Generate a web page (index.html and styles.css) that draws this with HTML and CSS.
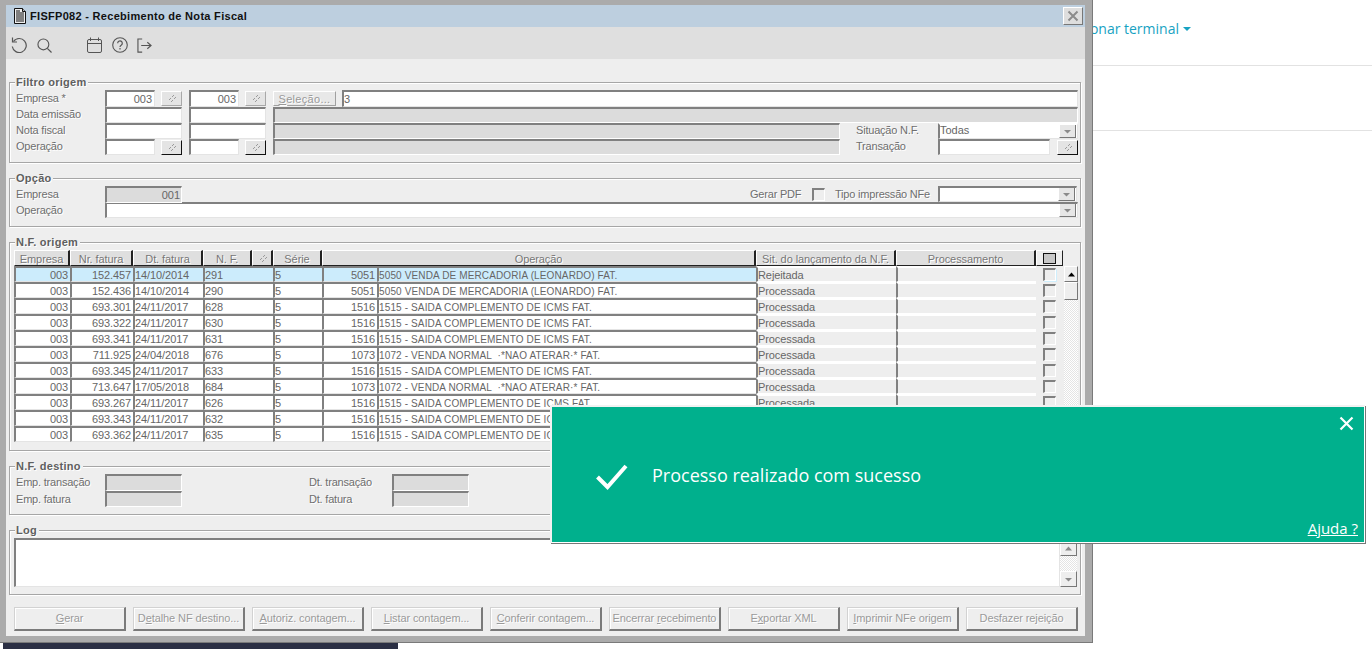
FILE: index.html
```html
<!DOCTYPE html>
<html lang="pt-BR">
<head>
<meta charset="utf-8">
<title>FISFP082 - Recebimento de Nota Fiscal</title>
<link rel="stylesheet" href="styles.css">
</head>
<body>
<svg class="defs" width="0" height="0" aria-hidden="true">
  <symbol id="zoom" viewBox="0 0 13 11"><path d="M8 2.500h1M7 3.500h1M5 5.500h1M4 6.500h1M10 4.500h1M9 5.500h1M7 7.500h1M6 8.500h1" stroke="#9a9a9a" stroke-width="1" fill="none"/></symbol>
  <symbol id="down" viewBox="0 0 9 5"><path d="M1 1h7L4.500 4.500z" fill="#8a8a8a"/></symbol>
</svg>

<header class="topbar"><a class="terminal">Selecionar terminal<span class="caret"></span></a></header>
<div class="subbar"></div>

<div class="taskbar"></div>

<main class="window">
  <div class="titlebar">
    <svg class="docicon" width="14" height="18" viewBox="0 0 14 18"><path d="M1.500 1.500h8l3 3v12h-11z" fill="#eee" stroke="#111"/><path d="M3 4h4M3 6h8M3 8h8M3 10h8M3 12h8M3 14h8" stroke="#111" stroke-width="1.200"/><path d="M9.500 1.500v3h3" fill="#bbb" stroke="#111"/></svg>
    <h1 class="title">FISFP082 - Recebimento de Nota Fiscal</h1>
    <button class="winclose" aria-label="Fechar"><svg width="12" height="12" viewBox="0 0 12 12"><path d="M1.500 1.500l9 9M10.500 1.500l-9 9" stroke="#8b8b8b" stroke-width="2" fill="none"/></svg></button>
  </div>
  <div class="toolbar">
    <svg class="tool t-undo" width="18" height="16" viewBox="0 0 18 16"><path d="M3.500 4.500A7 7 0 1 1 2.300 9.500" fill="none" stroke="#555" stroke-width="1.200"/><path d="M2.500 .5v4.500h4.500" fill="none" stroke="#555" stroke-width="1.200"/></svg>
    <svg class="tool t-search" width="15" height="15" viewBox="0 0 16 16"><circle cx="6.800" cy="6.800" r="5.800" fill="none" stroke="#555" stroke-width="1.200"/><path d="M11 11l4.500 4.500" stroke="#555" stroke-width="1.300"/></svg>
    <svg class="tool t-cal" width="15" height="16" viewBox="0 0 15 16"><rect x=".5" y="2.500" width="14" height="13" rx="1.500" fill="none" stroke="#555"/><path d="M.5 6.500h14M3.500 .5v3.500M11.500 .5v3.500" stroke="#555" fill="none"/></svg>
    <svg class="tool t-help" width="16" height="16" viewBox="0 0 16 16"><circle cx="8" cy="8" r="7.300" fill="none" stroke="#555" stroke-width="1.100"/><path d="M5.700 6.200a2.300 2.300 0 1 1 3.700 1.800c-.9.600-1.400 1-1.400 2" fill="none" stroke="#555" stroke-width="1.200"/><path d="M8 11v1.500" stroke="#555" stroke-width="1.200"/></svg>
    <svg class="tool t-exit" width="15" height="15" viewBox="0 0 16 16"><path d="M5.500 1H1v14h4.500" fill="none" stroke="#555" stroke-width="1.200"/><path d="M4.500 8h10.500M11 4.500L15 8l-4 3.500" fill="none" stroke="#555" stroke-width="1.200"/></svg>
  </div>

  <div class="content">
    <section class="group g-filtro">
      <h2 class="legend">Filtro origem</h2>
      <div class="form-filtro">
        <span class="lbl">Empresa *</span>
        <span class="fld num c2">003</span><button class="zbtn flat c4"><svg width="13" height="11"><use href="#zoom"/></svg></button>
        <span class="fld num c6">003</span><button class="zbtn flat c8"><svg width="13" height="11"><use href="#zoom"/></svg></button>
        <button class="selbtn c10"><u>S</u>eleção...</button>
        <span class="fld c12-18">3</span>

        <span class="lbl up1">Data emissão</span>
        <span class="fld c2-5"></span><span class="fld c6-9"></span>
        <span class="fld off c10-18"></span>

        <span class="lbl up1">Nota fiscal</span>
        <span class="fld c2-5"></span><span class="fld c6-9"></span>
        <span class="fld off c10-13"></span>
        <span class="lbl c14 up1">Situação N.F.</span>
        <span class="fld sel c15-18">Todas<i class="ddbtn"><svg width="9" height="5"><use href="#down"/></svg></i></span>

        <span class="lbl up1">Operação</span>
        <span class="fld c2n"></span><button class="zbtn c4"><svg width="13" height="11"><use href="#zoom"/></svg></button>
        <span class="fld c6"></span><button class="zbtn c8"><svg width="13" height="11"><use href="#zoom"/></svg></button>
        <span class="fld off c10-13"></span>
        <span class="lbl c14 up1">Transação</span>
        <span class="fld c15"></span><button class="zbtn c17"><svg width="13" height="11"><use href="#zoom"/></svg></button>
      </div>
    </section>

    <section class="group g-opcao">
      <h2 class="legend">Opção</h2>
      <div class="form-opcao">
        <span class="lbl">Empresa</span>
        <span class="fld off num">001</span>
        <span class="lbl pdf">Gerar PDF</span>
        <span class="check"></span>
        <span class="lbl tipo">Tipo impressão NFe</span>
        <span class="fld sel"><i class="ddbtn"><svg width="9" height="5"><use href="#down"/></svg></i></span>
        <span class="lbl">Operação</span>
        <span class="fld sel wide"><i class="ddbtn"><svg width="9" height="5"><use href="#down"/></svg></i></span>
      </div>
    </section>

    <section class="group g-origem">
      <h2 class="legend">N.F. origem</h2>
      <div class="grid-wrap">
        <table class="grid">
          <colgroup><col class="w-emp"><col class="w-nr"><col class="w-dt"><col class="w-nf"><col class="w-ic"><col class="w-se"><col class="w-cod"><col class="w-op"><col class="w-sit"><col class="w-pr"><col class="w-ck"></colgroup>
          <thead><tr>
            <th>Empresa</th><th>Nr. fatura</th><th>Dt. fatura</th><th>N. F.</th><th><svg width="13" height="11"><use href="#zoom"/></svg></th><th>Série</th><th colspan="2">Operação</th><th>Sit. do lançamento da N.F.</th><th>Processamento</th><th><span class="allcheck"></span></th>
          </tr></thead>
          <tbody>
            <tr class="active"><td class="n">003</td><td class="n">152.457</td><td>14/10/2014</td><td colspan="2">291</td><td>5</td><td class="n">5051</td><td class="op">5050 VENDA DE MERCADORIA (LEONARDO) FAT.</td><td class="ro">Rejeitada</td><td class="ro"></td><td class="ckc"><span class="check focus"></span></td></tr>
            <tr><td class="n">003</td><td class="n">152.436</td><td>14/10/2014</td><td colspan="2">290</td><td>5</td><td class="n">5051</td><td class="op">5050 VENDA DE MERCADORIA (LEONARDO) FAT.</td><td class="ro">Processada</td><td class="ro"></td><td class="ckc"><span class="check"></span></td></tr>
            <tr><td class="n">003</td><td class="n">693.301</td><td>24/11/2017</td><td colspan="2">628</td><td>5</td><td class="n">1516</td><td class="op">1515 - SAIDA COMPLEMENTO DE ICMS FAT.</td><td class="ro">Processada</td><td class="ro"></td><td class="ckc"><span class="check"></span></td></tr>
            <tr><td class="n">003</td><td class="n">693.322</td><td>24/11/2017</td><td colspan="2">630</td><td>5</td><td class="n">1516</td><td class="op">1515 - SAIDA COMPLEMENTO DE ICMS FAT.</td><td class="ro">Processada</td><td class="ro"></td><td class="ckc"><span class="check"></span></td></tr>
            <tr><td class="n">003</td><td class="n">693.341</td><td>24/11/2017</td><td colspan="2">631</td><td>5</td><td class="n">1516</td><td class="op">1515 - SAIDA COMPLEMENTO DE ICMS FAT.</td><td class="ro">Processada</td><td class="ro"></td><td class="ckc"><span class="check"></span></td></tr>
            <tr><td class="n">003</td><td class="n">711.925</td><td>24/04/2018</td><td colspan="2">676</td><td>5</td><td class="n">1073</td><td class="op">1072 - VENDA NORMAL &nbsp;·*NAO ATERAR·* FAT.</td><td class="ro">Processada</td><td class="ro"></td><td class="ckc"><span class="check"></span></td></tr>
            <tr><td class="n">003</td><td class="n">693.345</td><td>24/11/2017</td><td colspan="2">633</td><td>5</td><td class="n">1516</td><td class="op">1515 - SAIDA COMPLEMENTO DE ICMS FAT.</td><td class="ro">Processada</td><td class="ro"></td><td class="ckc"><span class="check"></span></td></tr>
            <tr><td class="n">003</td><td class="n">713.647</td><td>17/05/2018</td><td colspan="2">684</td><td>5</td><td class="n">1073</td><td class="op">1072 - VENDA NORMAL &nbsp;·*NAO ATERAR·* FAT.</td><td class="ro">Processada</td><td class="ro"></td><td class="ckc"><span class="check"></span></td></tr>
            <tr><td class="n">003</td><td class="n">693.267</td><td>24/11/2017</td><td colspan="2">626</td><td>5</td><td class="n">1516</td><td class="op">1515 - SAIDA COMPLEMENTO DE ICMS FAT.</td><td class="ro">Processada</td><td class="ro"></td><td class="ckc"><span class="check"></span></td></tr>
            <tr><td class="n">003</td><td class="n">693.343</td><td>24/11/2017</td><td colspan="2">632</td><td>5</td><td class="n">1516</td><td class="op">1515 - SAIDA COMPLEMENTO DE ICMS FAT.</td><td class="ro">Processada</td><td class="ro"></td><td class="ckc"><span class="check"></span></td></tr>
            <tr><td class="n">003</td><td class="n">693.362</td><td>24/11/2017</td><td colspan="2">635</td><td>5</td><td class="n">1516</td><td class="op">1515 - SAIDA COMPLEMENTO DE ICMS FAT.</td><td class="ro">Processada</td><td class="ro"></td><td class="ckc"><span class="check"></span></td></tr>
          </tbody>
        </table>
        <div class="vscroll">
          <span class="sb-btn up"><svg width="9" height="5" viewBox="0 0 9 5"><path d="M1 4.500h7L4.500 .5z" fill="#000"/></svg></span>
          <span class="sb-thumb"></span>
        </div>
      </div>
    </section>

    <section class="group g-destino">
      <h2 class="legend">N.F. destino</h2>
      <div class="form-destino">
        <span class="lbl">Emp. transação</span><span class="fld off"></span><span class="lbl far">Dt. transação</span><span class="fld off"></span>
        <span class="lbl">Emp. fatura</span><span class="fld off"></span><span class="lbl far">Dt. fatura</span><span class="fld off"></span>
      </div>
    </section>

    <section class="group g-log">
      <h2 class="legend">Log</h2>
      <div class="log-wrap">
        <div class="logbox"></div>
        <div class="logscroll">
          <span class="sb-btn lo"><svg width="9" height="5" viewBox="0 0 9 5"><path d="M1 4.500h7L4.500 .5z" fill="#8a8a8a"/></svg></span>
          <span class="sb-btn lo"><svg width="9" height="5"><use href="#down"/></svg></span>
        </div>
      </div>
    </section>

    <div class="actions">
      <button class="act"><u>G</u>erar</button>
      <button class="act">D<u>e</u>talhe NF destino...</button>
      <button class="act"><u>A</u>utoriz. contagem...</button>
      <button class="act"><u>L</u>istar contagem...</button>
      <button class="act"><u>C</u>onferir contagem...</button>
      <button class="act">Encerrar <u>r</u>ecebimento</button>
      <button class="act">E<u>x</u>portar XML</button>
      <button class="act"><u>I</u>mprimir NFe origem</button>
      <button class="act">Desfazer re<u>j</u>eição</button>
    </div>
  </div>
</main>

<aside class="toast">
  <button class="toast-close" aria-label="Fechar"><svg width="15" height="15" viewBox="0 0 15 15"><path d="M1.500 1.500l12 12M13.500 1.500l-12 12" stroke="#fff" stroke-width="2.200" fill="none"/></svg></button>
  <div class="toast-msg">
    <svg class="toast-check" width="34" height="27" viewBox="0 0 34 27"><path d="M2.500 14l10 10L31 3" fill="none" stroke="#fff" stroke-width="4"/></svg>
    <span>Processo realizado com sucesso</span>
  </div>
  <a class="toast-help">Ajuda ?</a>
</aside>
</body>
</html>
```
FILE: styles.css
```css
* { box-sizing: border-box; }
html, body { margin: 0; height: 100%; }
body {
  position: relative;
  width: 1372px;
  height: 649px;
  overflow: hidden;
  background: #fff;
  font: 11px/16px "Liberation Sans", Arial, sans-serif;
  color: #666;
}
.defs { position: absolute; }

/* page behind the window */
.topbar {
  height: 66px;
  border-bottom: 1px solid #e2e2e2;
  padding: 20px 181px 0 0;
  text-align: right;
}
.terminal { font: 14px/18px "Open Sans", sans-serif; color: #17a2c2; }
.caret {
  display: inline-block;
  margin-left: 4px;
  vertical-align: 3px;
  border: 4px solid transparent;
  border-top-color: #17a2c2;
  border-bottom: 0;
}
.subbar { height: 65px; border-bottom: 1px solid #e2e2e2; }
.taskbar {
  position: absolute;
  left: 3px;
  bottom: 0;
  width: 395px;
  height: 6px;
  background: #2b2f44;
}

/* window */
.window {
  position: absolute;
  left: 0;
  top: 0;
  width: 1093px;
  height: 643px;
  padding: 5px 7px 6px 6px;
  background: #ababab;
  border-right: 1px solid #7a7a7a;
  border-bottom: 1px solid #7a7a7a;
  display: flex;
  flex-direction: column;
}
.titlebar {
  height: 22px;
  flex: none;
  background: #bdcfdf;
  display: flex;
  align-items: center;
  padding: 0 2px 0 7px;
}
.docicon { flex: none; }
.title {
  margin: 0 0 0 3px;
  font: bold 11px/16px "Liberation Sans", Arial, sans-serif;
  letter-spacing: .3px;
  color: #111;
  flex: 1;
}
.winclose {
  width: 20px;
  height: 18px;
  padding: 0;
  display: flex;
  align-items: center;
  justify-content: center;
  background: #dedede;
  border: 1px solid;
  border-color: #fff #777 #777 #fff;
}
.toolbar {
  height: 32px;
  flex: none;
  background: #dfdfdf;
  display: flex;
  align-items: center;
  padding-top: 4px;
}
.tool { flex: none; }
.t-undo { margin-left: 4px; }
.t-search { margin-left: 9px; }
.t-cal { margin-left: 35px; }
.t-help { margin-left: 10px; }
.t-exit { margin-left: 9px; }

.content {
  flex: 1;
  background: #eee;
  padding: 23px 4px 0 3px;
}

/* groups */
.group {
  border: 1px solid #a6a6a6;
  box-shadow: inset 1px 1px 0 #fff, 1px 1px 0 #fff;
  padding: 0 0 0 4px;
  margin-bottom: 15px;
}
.g-filtro { height: 81px; }
.g-opcao { height: 49px; }
.g-origem { height: 209px; }
.g-destino { height: 49px; }
.g-log { height: 65px; margin-bottom: 12px; }

.legend {
  display: table;
  height: 13px;
  margin: -7px 0 0 1px;
  padding: 0 2px 0 1px;
  background: #eee;
  font: bold 11px/13px "Liberation Sans", Arial, sans-serif;
  letter-spacing: .25px;
  color: #5f5f5f;
  text-shadow: 1px 1px 0 #fff;
}
.lbl {
  padding-left: 2px;
  color: #6e6e6e;
  text-shadow: 1px 1px 0 #fff;
  white-space: nowrap;
  letter-spacing: -.2px;
}
.up1 { margin-top: -1px; }

/* fields */
.fld {
  display: block;
  background: #fff;
  border-style: solid;
  border-width: 2px 1px 1px 2px;
  border-color: #808080 #e4e4e4 #e4e4e4 #808080;
  padding: 0 1px 0 0;
  line-height: 14px;
  color: #666;
  min-width: 0;
  white-space: nowrap;
  overflow: hidden;
}
.fld.num { text-align: right; padding-right: 2px; }
.fld.off { background: #dcdcdc; border-right-color: #fff; border-bottom-color: #fff; }
.fld.sel { position: relative; line-height: 11px; }
.ddbtn {
  position: absolute;
  right: 1px;
  top: -1px;
  width: 17px;
  height: 14px;
  background: #e6e6e6;
  border: 1px solid;
  border-color: #fff #777 #777 #fff;
  display: flex;
  align-items: center;
  justify-content: center;
}
.zbtn {
  padding: 0;
  height: 15px;
  margin-top: 1px;
  background: #e4e4e4;
  border: 1px solid;
  border-color: #fff #111 #111 #fff;
  display: flex;
  align-items: center;
  justify-content: center;
}
.zbtn.flat { background: #e4e4e4; border-color: #fff #a8a8a8 #a8a8a8 #fff; height: 15px; }
.selbtn {
  padding: 0;
  height: 15px;
  margin-top: 1px;
  background: #e8e8e8;
  border: 1px solid;
  border-color: #fff #a0a0a0 #a0a0a0 #fff;
  font: 11px/12px "Liberation Sans", Arial, sans-serif;
  letter-spacing: .3px;
  color: #999;
  text-shadow: 1px 1px 0 #fff;
}
.check {
  display: block;
  width: 13px;
  height: 13px;
  background: #eee;
  border-style: solid;
  border-width: 2px 1px 1px 2px;
  border-color: #808080 #fff #fff #808080;
}
.check.focus { box-shadow: 1px 1px 0 #cfeefc; }

.form-filtro {
  display: grid;
  margin-top: 1px;
  grid-template-columns: 91px 50px 6px 21px 7px 50px 6px 21px 7px 63px 6px 498px 15px 83px 112px 7px 21px;
  grid-template-rows: 17px 16px 16px 16px;
}
.form-filtro .lbl { grid-column: 1; }
.form-filtro .c2 { grid-column: 2; }
.form-filtro .c2n { grid-column: 2; }
.form-filtro .c4 { grid-column: 4; }
.form-filtro .c6 { grid-column: 6; }
.form-filtro .c8 { grid-column: 8; }
.form-filtro .c10 { grid-column: 10; }
.form-filtro .c2-5 { grid-column: 2 / 5; }
.form-filtro .c6-9 { grid-column: 6 / 9; }
.form-filtro .c10-18 { grid-column: 10 / 18; }
.form-filtro .c10-13 { grid-column: 10 / 13; }
.form-filtro .c12-18 { grid-column: 12 / 18; }
.form-filtro .lbl.c14 { grid-column: 14; padding-left: 1px; }
.form-filtro .c15 { grid-column: 15; }
.form-filtro .c15-18 { grid-column: 15 / 18; border-top-color: #fff; }
.form-filtro .c17 { grid-column: 17; }

.form-opcao {
  display: grid;
  margin-top: 1px;
  grid-template-columns: 91px 77px 568px 62px 13px 113px 139px;
  grid-template-rows: 16px 16px;
}
.form-opcao .fld.num { grid-column: 2; margin-bottom: -1px; position: relative; z-index: 1; padding-right: 1px; }
.form-opcao .pdf { grid-column: 4; padding: 0; }
.form-opcao .check { grid-column: 5; margin-top: 2px; }
.form-opcao .tipo { grid-column: 6; padding-left: 10px; }
.form-opcao .wide { grid-column: 2 / 8; margin-right: -1px; }
.form-opcao .lbl:first-child { grid-column: 1; }
.form-opcao > .lbl:nth-child(7) { grid-column: 1; }

.form-destino {
  display: grid;
  margin-top: 1px;
  grid-template-columns: 91px 77px 127px 83px 77px;
  grid-template-rows: 17px 16px;
}
.form-destino .far { grid-column: 4; padding-left: 0; }

/* data grid */
.grid-wrap { display: flex; margin-top: 1px; }
.grid {
  table-layout: fixed;
  width: 1049px;
  height: 192px;
  border-collapse: separate;
  border-spacing: 0;
  flex: none;
}
.w-emp { width: 56px; } .w-nr { width: 63px; } .w-dt { width: 70px; } .w-nf { width: 49px; }
.w-ic { width: 21px; } .w-se { width: 49px; } .w-cod { width: 55px; } .w-op { width: 379px; }
.w-sit { width: 140px; } .w-pr { width: 140px; } .w-ck { width: 27px; }
.grid th {
  height: 16px;
  padding: 1px 0 0;
  background: #dfdfdf;
  border-left: 1px solid #fff;
  border-top: 1px solid #fff;
  border-right: 2px solid #222;
  border-bottom: 1px solid #222;
  font: 11px/12px "Liberation Sans", Arial, sans-serif;
  letter-spacing: -.08px;
  color: #777;
  text-shadow: 1px 1px 0 #fff;
  vertical-align: middle;
  overflow: hidden;
  white-space: nowrap;
}
.grid th svg { display: block; margin: 0 auto; }
.grid th:last-child { background: #eee; border-right-width: 1px; }
.allcheck {
  display: block;
  width: 13px;
  height: 11px;
  margin: 0 auto;
  background: #c8c8c8;
  border: 1px solid #111;
}
.grid td {
  height: 16px;
  padding: 0 2px 0 0;
  background: #fff;
  border-style: solid;
  border-width: 2px 0 1px 2px;
  border-color: #808080 transparent #e4e4e4 #808080;
  line-height: 12px;
  letter-spacing: -.1px;
  color: #666;
  white-space: nowrap;
  overflow: hidden;
}
.grid td.n { text-align: right; }
.grid td.op { font-size: 10px; letter-spacing: .13px; padding-top: 2px; line-height: 11px; }
.grid .active td { background: #ccecfc; }
.grid td.ro, .grid .active td.ro { background: #eee; border-top-color: #fff; border-bottom-color: #fff; }
.grid td.ckc, .grid .active td.ckc { background: #eee; border: 0; padding: 1px 0 0 7px; }
.vscroll {
  width: 14px;
  margin: 16px 0 0 1px;
  height: 176px;
  background: repeating-conic-gradient(#fff 0 25%, #e4e4e4 0 50%) 0 0 / 2px 2px;
}
.sb-btn {
  display: flex;
  align-items: center;
  justify-content: center;
  height: 16px;
  background: #eee;
  border: 1px solid;
  border-color: #fff #777 #777 #fff;
}
.sb-thumb {
  display: block;
  height: 18px;
  background: #eee;
  border: 1px solid;
  border-color: #fff #777 #777 #fff;
}

/* log */
.log-wrap { display: flex; margin-top: 1px; }
.logbox {
  width: 1046px;
  height: 49px;
  background: #fff;
  border-style: solid;
  border-width: 2px 1px 1px 2px;
  border-color: #808080 #e4e4e4 #e4e4e4 #808080;
}
.logscroll {
  width: 17px;
  height: 49px;
  padding-top: 2px;
  display: flex;
  flex-direction: column;
  justify-content: space-between;
  background: repeating-conic-gradient(#fff 0 25%, #e4e4e4 0 50%) 0 0 / 2px 2px;
}

/* action buttons */
.actions { display: flex; gap: 7px; padding-left: 5px; }
.act {
  width: 112px;
  height: 24px;
  padding: 0 0 2px;
  background: #eee;
  border-style: solid;
  border-width: 1px 2px 2px 1px;
  border-color: #d2d2d2 #7a7a7a #7a7a7a #d2d2d2;
  box-shadow: inset 1px 1px 0 #fff;
  font: 11px/16px "Liberation Sans", Arial, sans-serif;
  letter-spacing: -.1px;
  color: #9a9a9a;
  text-shadow: 1px 1px 0 #fff;
  white-space: nowrap;
}

/* toast */
.toast {
  position: absolute;
  left: 550px;
  top: 405px;
  width: 815px;
  height: 138px;
  background: #00b08d;
  border-style: solid;
  border-width: 2px 1px 1px 2px;
  border-color: #f2f2f2 #fff #fff #f2f2f2;
  box-shadow: 1px 1px 0 #777;
  display: flex;
  flex-direction: column;
  color: #fff;
}
.toast-close {
  align-self: flex-end;
  margin: 9px 10px 0 0;
  width: 15px;
  height: 15px;
  padding: 0;
  background: none;
  border: 0;
  display: block;
}
.toast-close svg { display: block; }
.toast-msg {
  display: flex;
  align-items: center;
  margin: 31px 0 0 43px;
  height: 28px;
  font: 18px/26px "Open Sans", sans-serif;
}
.toast-msg span { position: relative; top: -1px; left: -1px; }
.toast-check { flex: none; margin-right: 24px; }
.toast-help {
  align-self: flex-end;
  margin: auto 6px 5px 0;
  font: 15px/18px "Open Sans", sans-serif;
  text-decoration: underline;
  color: #fff;
}
```
